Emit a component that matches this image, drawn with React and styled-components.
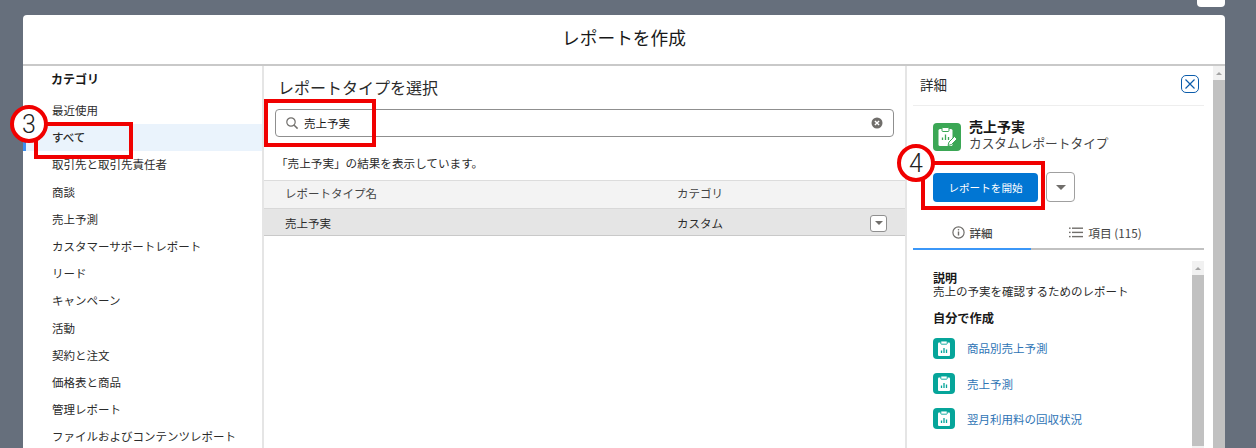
import React from 'react';
import styled, { createGlobalStyle } from 'styled-components';

const GlobalStyle = createGlobalStyle`
  html, body {
    margin: 0;
    padding: 0;
    height: 100%;
    overflow: hidden;
    background: #666f7c;
    font-family: "Noto Sans CJK JP", "Liberation Sans", sans-serif;
    color: #181818;
  }
`;

const Stage = styled.div`
  position: relative;
  width: 1256px;
  height: 448px;
  padding: 15px 31px 0 23px;
  box-sizing: border-box;
  overflow: hidden;
`;

const CloseChip = styled.div`
  position: absolute;
  top: -4px;
  left: 1197px;
  width: 28px;
  height: 11px;
  background: #fff;
  border-radius: 4px;
`;

const Modal = styled.div`
  background: #fff;
  border-radius: 4px 4px 0 0;
  height: 433px;
  overflow: hidden;
`;

const ModalHeader = styled.header`
  height: 51px;
  box-sizing: border-box;
  padding-bottom: 5px;
  display: flex;
  align-items: center;
  justify-content: center;
  border-bottom: 2px solid #c9c9c9;
  font-size: 17.7px;
`;

const Columns = styled.div`
  display: grid;
  grid-template-columns: 241px 641px 320px;
  height: 382px;
`;

const Sidebar = styled.nav`
  padding-top: 3px;
  border-right: 2px solid #e5e5e5;
`;

const SidebarTitle = styled.div`
  font-size: 12px;
  font-weight: 700;
  line-height: 20px;
  padding-left: 28px;
  margin-bottom: 8px;
`;

const SidebarItem = styled.div`
  height: 27.2px;
  line-height: 27px;
  font-size: 11.5px;
  padding-left: 29px;
  white-space: nowrap;
  color: #2b2b2b;
  position: relative;
  background: ${(p) => (p.$active ? '#eaf3fc' : 'transparent')};
  font-weight: ${(p) => (p.$active ? 500 : 400)};

  &::before {
    content: '';
    display: ${(p) => (p.$active ? 'block' : 'none')};
    position: absolute;
    left: 0;
    top: 18px;
    bottom: 0;
    width: 3px;
    background: #3b8ff0;
  }
`;

const Middle = styled.section`
  display: flex;
  flex-direction: column;
`;

const MiddleTitle = styled.h2`
  margin: 0;
  padding: 9px 0 0 14px;
  font-size: 16px;
  font-weight: 400;
  line-height: 24px;
  color: #2b2b2b;
`;

const SearchBox = styled.div`
  margin: 10px 11px 0 11px;
  height: 28px;
  box-sizing: border-box;
  border: 1px solid #8f8f8f;
  border-radius: 4px;
  display: flex;
  align-items: center;
  padding: 0 10px 0 9px;
  font-size: 11.5px;
  gap: 5px;
`;

const SearchValue = styled.span`
  flex: 1;
`;

const ResultNote = styled.div`
  padding: 16px 0 0 12px;
  font-size: 11.6px;
  line-height: 20px;
  height: 27px;
  color: #2b2b2b;
`;

const TableHead = styled.div`
  display: grid;
  grid-template-columns: 392px 1fr;
  height: 29px;
  box-sizing: border-box;
  padding: 0 0 3px 21px;
  align-items: center;
  font-size: 11.5px;
  background: #f3f3f3;
  border-top: 1px solid #dcdcdc;
  border-bottom: 1px solid #d8d8d8;
  color: #444;
`;

const TableRow = styled.div`
  display: grid;
  grid-template-columns: 392px 1fr auto;
  height: 27px;
  box-sizing: border-box;
  align-items: center;
  padding: 2px 18px 0 21px;
  font-size: 11.5px;
  background: #e5e5e5;
  border-bottom: 1px solid #c9c9c9;
  color: #2b2b2b;
`;

const RowMenu = styled.div`
  width: 17px;
  height: 17px;
  box-sizing: border-box;
  border: 1px solid #8f8f8f;
  border-radius: 3px;
  background: #fff;
  display: flex;
  align-items: center;
  justify-content: center;
`;

const Caret = styled.span`
  width: 0;
  height: 0;
  border-left: ${(p) => p.$size}px solid transparent;
  border-right: ${(p) => p.$size}px solid transparent;
  border-top: ${(p) => p.$size}px solid #706e6b;
`;

const Detail = styled.aside`
  border-left: 2px solid #e5e5e5;
  display: flex;
  justify-content: space-between;
`;

const DetailMain = styled.div`
  width: 291px;
  margin-left: 6px;
`;

const DetailHeader = styled.div`
  height: 40px;
  box-sizing: border-box;
  display: flex;
  align-items: center;
  justify-content: space-between;
  padding: 0 5px 4px 7px;
  font-size: 13.5px;
  border-bottom: 1px solid #eeeeee;
  color: #2b2b2b;
`;

const CloseBtn = styled.div`
  width: 18px;
  height: 18px;
  box-sizing: border-box;
  border: 1.5px solid #0b5cab;
  border-radius: 5px;
  display: flex;
  align-items: center;
  justify-content: center;
`;

const TypeBlock = styled.div`
  display: flex;
  gap: 8px;
  padding: 12px 0 0 20px;
`;

const TypeIcon = styled.div`
  width: 28px;
  height: 28px;
  margin-top: 5px;
  border-radius: 4px;
  background: #3ba755;
  display: flex;
  align-items: center;
  justify-content: center;
`;

const TypeName = styled.div`
  font-size: 14px;
  font-weight: 700;
  line-height: 17px;
`;

const TypeKind = styled.div`
  font-size: 12.7px;
  line-height: 16px;
  color: #444;
`;

const Actions = styled.div`
  display: flex;
  align-items: center;
  gap: 8px;
  padding: 21px 0 0 20px;
`;

const StartButton = styled.div`
  width: 105px;
  height: 29px;
  border-radius: 4px;
  background: #0176d3;
  color: #fff;
  font-size: 10.6px;
  display: flex;
  align-items: center;
  justify-content: center;
`;

const MoreButton = styled.div`
  width: 29px;
  height: 30px;
  box-sizing: border-box;
  border: 1px solid #a0a0a0;
  border-radius: 4px;
  display: flex;
  align-items: center;
  justify-content: center;
`;

const Tabs = styled.div`
  display: grid;
  grid-template-columns: 118px 173px;
  margin-top: 12px;
  height: 36px;
`;

const Tab = styled.div`
  display: flex;
  align-items: center;
  justify-content: center;
  gap: 5px;
  box-sizing: border-box;
  padding: 3px ${(p) => (p.$active ? 0 : 24)}px 0 0;
  font-size: ${(p) => (p.$active ? 11.5 : 11.7)}px;
  color: #444;
  font-weight: ${(p) => (p.$active ? 500 : 400)};
  border-bottom: 2px solid ${(p) => (p.$active ? '#3b97f8' : '#c1c1c1')};
`;

const TabBody = styled.div`
  display: flex;
  justify-content: space-between;
  padding-top: 11px;
`;

const TabContent = styled.div`
  padding: 10px 0 0 20px;
`;

const FieldLabel = styled.div`
  font-size: 12px;
  font-weight: 700;
  line-height: 13px;
`;

const FieldValue = styled.div`
  font-size: 11.5px;
  line-height: 14px;
  color: #2b2b2b;
`;

const SectionLabel = styled.div`
  font-size: 12.2px;
  font-weight: 700;
  margin-top: 11px;
  line-height: 18px;
`;

const LinkList = styled.div`
  display: flex;
  flex-direction: column;
  gap: 14px;
  margin-top: 10.5px;
`;

const LinkRow = styled.div`
  display: flex;
  align-items: center;
  gap: 12px;
  height: 21.4px;
  font-size: 11.5px;
  color: #2e74b5;
`;

const ReportIcon = styled.div`
  width: 22px;
  height: 21px;
  border-radius: 4px;
  background: #06a59a;
  display: flex;
  align-items: center;
  justify-content: center;
`;

const Scrollbar = styled.div`
  width: 12px;
  height: ${(p) => p.$h}px;
  background: #f1f1f1;
  display: flex;
  flex-direction: column;
  align-items: center;
  flex-shrink: 0;
`;

const ScrollArrow = styled.div`
  flex-shrink: 0;
  margin: 6px 0 5px;
  width: 0;
  height: 0;
  border-left: 3px solid transparent;
  border-right: 3px solid transparent;
  border-bottom: 3px solid #a3a3a3;
`;

const ScrollThumb = styled.div`
  width: 100%;
  height: ${(p) => p.$h}px;
  background: #c1c1c1;
`;

const NumberBadge = styled.div`
  position: absolute;
  left: ${(p) => p.$x}px;
  top: ${(p) => p.$y}px;
  width: 38px;
  height: 38px;
  box-sizing: border-box;
  border: 4px solid #f00000;
  border-radius: 50%;
  background: #fff;
  display: flex;
  align-items: center;
  justify-content: center;
  font-family: Roboto, "Liberation Sans", sans-serif;
  font-weight: 300;
  font-size: 25px;
  line-height: 1;
  color: #222;
`;

const RedFrame = styled.div`
  position: absolute;
  left: ${(p) => p.$x}px;
  top: ${(p) => p.$y}px;
  width: ${(p) => p.$w}px;
  height: ${(p) => p.$h}px;
  box-sizing: border-box;
  border: 4px solid #f00000;
`;

const SearchIcon = () => (
  <svg width="14" height="14" viewBox="0 0 14 14" fill="none" stroke="#706e6b" strokeWidth="1.2">
    <circle cx="6" cy="6" r="4.2" />
    <path d="M9.2 9.2 L12.6 12.6" strokeWidth="1.5" />
  </svg>
);

const ClearIcon = () => (
  <svg width="12" height="12" viewBox="0 0 12 12">
    <circle cx="6" cy="6" r="5.5" fill="#706e6b" />
    <path d="M3.9 3.9 L8.1 8.1 M8.1 3.9 L3.9 8.1" stroke="#fff" strokeWidth="1.4" />
  </svg>
);

const CrossIcon = () => (
  <svg width="12" height="12" viewBox="0 0 12 12">
    <path d="M1.5 1.5 L10.5 10.5 M10.5 1.5 L1.5 10.5" stroke="#0b5cab" strokeWidth="1.2" />
  </svg>
);

const InfoIcon = () => (
  <svg width="13" height="13" viewBox="0 0 13 13" fill="none">
    <circle cx="6.5" cy="6.5" r="5.6" stroke="#706e6b" strokeWidth="1.2" />
    <path d="M6.5 5.6 V9.6" stroke="#706e6b" strokeWidth="1.4" />
    <circle cx="6.5" cy="3.8" r="0.8" fill="#706e6b" />
  </svg>
);

const ListIcon = () => (
  <svg width="14" height="11" viewBox="0 0 14 11" fill="#706e6b">
    <rect x="0" y="0.5" width="1.6" height="1.4" />
    <rect x="3" y="0.5" width="11" height="1.4" />
    <rect x="0" y="4.7" width="1.6" height="1.4" />
    <rect x="3" y="4.7" width="11" height="1.4" />
    <rect x="0" y="8.9" width="1.6" height="1.4" />
    <rect x="3" y="8.9" width="11" height="1.4" />
  </svg>
);

const ClipboardPen = () => (
  <svg width="24" height="24" viewBox="0 0 24 24">
    <rect x="3.5" y="4" width="14" height="17" rx="1.5" fill="#fff" />
    <rect x="7" y="2.5" width="7" height="4" rx="1" fill="#fff" stroke="#3ba755" strokeWidth="1" />
    <path d="M7.5 15 V12.5 M10.5 15 V9.5 M13.5 15 V12" stroke="#3ba755" strokeWidth="1.3" />
    <path d="M13 20.5 L14 17 L19.5 11.5 L22 14 L16.5 19.5 Z" fill="#fff" stroke="#3ba755" strokeWidth="1" />
  </svg>
);

const ClipboardChart = () => (
  <svg width="16" height="17" viewBox="0 0 16 17">
    <rect x="2" y="2.5" width="12" height="13.5" rx="1" fill="#fff" />
    <rect x="4.8" y="1" width="6.4" height="3.2" rx="0.7" fill="#fff" stroke="#06a59a" strokeWidth="0.9" />
    <path d="M5.5 13 V10.5 M8 13 V8 M10.5 13 V9.5" stroke="#06a59a" strokeWidth="1.3" />
  </svg>
);

const categories = [
  '取引先と取引先責任者',
  '商談',
  '売上予測',
  'カスタマーサポートレポート',
  'リード',
  'キャンペーン',
  '活動',
  '契約と注文',
  '価格表と商品',
  '管理レポート',
  'ファイルおよびコンテンツレポート',
];

const reports = ['商品別売上予測', '売上予測', '翌月利用料の回収状況'];

export default function App() {
  return (
    <Stage>
      <GlobalStyle />
      <CloseChip />
      <Modal>
        <ModalHeader>レポートを作成</ModalHeader>
        <Columns>
          <Sidebar>
            <SidebarTitle>カテゴリ</SidebarTitle>
            <SidebarItem>最近使用</SidebarItem>
            <SidebarItem $active>すべて</SidebarItem>
            {categories.map((c) => (
              <SidebarItem key={c}>{c}</SidebarItem>
            ))}
          </Sidebar>
          <Middle>
            <MiddleTitle>レポートタイプを選択</MiddleTitle>
            <SearchBox>
              <SearchIcon />
              <SearchValue>売上予実</SearchValue>
              <ClearIcon />
            </SearchBox>
            <ResultNote>「売上予実」の結果を表示しています。</ResultNote>
            <TableHead>
              <span>レポートタイプ名</span>
              <span>カテゴリ</span>
            </TableHead>
            <TableRow>
              <span>売上予実</span>
              <span>カスタム</span>
              <RowMenu>
                <Caret $size={4} />
              </RowMenu>
            </TableRow>
          </Middle>
          <Detail>
            <DetailMain>
              <DetailHeader>
                詳細
                <CloseBtn>
                  <CrossIcon />
                </CloseBtn>
              </DetailHeader>
              <TypeBlock>
                <TypeIcon>
                  <ClipboardPen />
                </TypeIcon>
                <div>
                  <TypeName>売上予実</TypeName>
                  <TypeKind>カスタムレポートタイプ</TypeKind>
                </div>
              </TypeBlock>
              <Actions>
                <StartButton>レポートを開始</StartButton>
                <MoreButton>
                  <Caret $size={5} />
                </MoreButton>
              </Actions>
              <Tabs>
                <Tab $active>
                  <InfoIcon />
                  詳細
                </Tab>
                <Tab>
                  <ListIcon />
                  項目 (115)
                </Tab>
              </Tabs>
              <TabBody>
                <TabContent>
                  <FieldLabel>説明</FieldLabel>
                  <FieldValue>売上の予実を確認するためのレポート</FieldValue>
                  <SectionLabel>自分で作成</SectionLabel>
                  <LinkList>
                    {reports.map((r) => (
                      <LinkRow key={r}>
                        <ReportIcon>
                          <ClipboardChart />
                        </ReportIcon>
                        {r}
                      </LinkRow>
                    ))}
                  </LinkList>
                </TabContent>
                <Scrollbar $h={187}>
                  <ScrollArrow />
                  <ScrollThumb $h={171} />
                </Scrollbar>
              </TabBody>
            </DetailMain>
            <Scrollbar $h={382}>
              <ScrollArrow />
              <ScrollThumb $h={368} />
            </Scrollbar>
          </Detail>
        </Columns>
      </Modal>
      <RedFrame $x={34} $y={122} $w={99} $h={37} />
      <RedFrame $x={264} $y={99} $w={112} $h={48} />
      <RedFrame $x={921} $y={161} $w={124} $h={49} />
      <NumberBadge $x={10} $y={105}>3</NumberBadge>
      <NumberBadge $x={897} $y={144}>4</NumberBadge>
    </Stage>
  );
}
